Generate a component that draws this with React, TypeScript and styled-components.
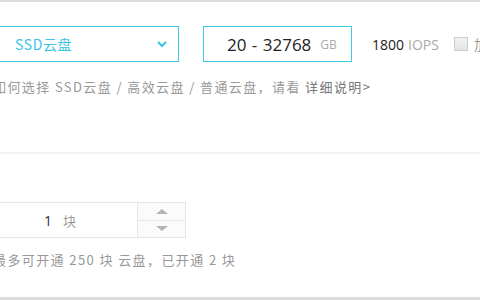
import styled, { createGlobalStyle } from "styled-components";

const GlobalStyle = createGlobalStyle`
  html, body {
    margin: 0;
    padding: 0;
    background: #fff;
    overflow: hidden;
  }
  body {
    font-family: "Liberation Sans", "Noto Sans CJK SC", sans-serif;
  }
`;

const Page = styled.div`
  width: 480px;
  height: 300px;
  box-sizing: border-box;
  border-top: 2px solid #dcdcdc;
  border-bottom: 3px solid #dcdcdc;
  display: flex;
  flex-direction: column;
  overflow: hidden;
`;

const Section = styled.div<{ $top: number; $height: number; $divider?: boolean }>`
  padding-top: ${(p) => p.$top}px;
  height: ${(p) => p.$height}px;
  box-sizing: border-box;
  border-bottom: ${(p) => (p.$divider ? "2px solid #f2f2f2" : "none")};
  margin-left: -20px;
`;

const Row = styled.div`
  display: flex;
  align-items: center;
  & > * {
    flex-shrink: 0;
  }
`;

const Select = styled.div`
  width: 199px;
  height: 36px;
  box-sizing: border-box;
  border: 1px solid #3fcbe6;
  display: flex;
  align-items: center;
  justify-content: space-between;
  padding: 0 10px 0 34px;
  color: #3cc4e4;
  font-size: 14px;
  letter-spacing: 0.6px;
  font-family: "Noto Sans CJK SC", sans-serif;
`;

const SizeBox = styled.div`
  margin-left: 24px;
  width: 149px;
  height: 36px;
  box-sizing: border-box;
  border: 1px solid #3fcbe6;
  display: flex;
  align-items: center;
  padding-left: 23px;
  font-family: "Open Sans", "Liberation Sans", sans-serif;
`;

const Range = styled.span`
  font-size: 17px;
  color: #222;
  word-spacing: 1px;
`;

const Unit = styled.span`
  font-size: 12px;
  color: #aaa;
  margin-left: 9px;
`;

const Iops = styled.div`
  margin-left: 20px;
  font-size: 14px;
  font-family: "Open Sans", "Liberation Sans", sans-serif;
  color: #222;
  display: flex;
  align-items: center;
  white-space: nowrap;
`;

const IopsLabel = styled.span`
  color: #aaa;
  margin-left: 4px;
`;

const Check = styled.span`
  display: inline-block;
  width: 14px;
  height: 14px;
  box-sizing: border-box;
  border: 1px solid #ccc;
  background: linear-gradient(#f4f4f4, #e4e4e4);
  margin-left: 15px;
`;

const CutText = styled.span`
  margin-left: 6px;
  color: #999;
  font-family: "Noto Sans CJK SC", sans-serif;
`;

const Hint = styled.div<{ $top: number }>`
  margin-top: ${(p) => p.$top}px;
  margin-left: 13px;
  font-size: 13px;
  letter-spacing: 1.4px;
  color: #999;
  font-family: "Noto Sans CJK SC", sans-serif;
  white-space: nowrap;
`;

const Link = styled.span`
  color: #777;
`;

const Stepper = styled.div`
  display: flex;
  height: 36px;
`;

const StepInput = styled.div`
  width: 157px;
  box-sizing: border-box;
  border: 1px solid #e6e6e6;
  border-right: none;
  display: flex;
  align-items: center;
  justify-content: center;
  gap: 11px;
  padding-left: 2px;
`;

const Count = styled.span`
  font-size: 14px;
  color: #333;
  font-family: "Open Sans", "Liberation Sans", sans-serif;
`;

const CountUnit = styled.span`
  font-size: 13px;
  color: #999;
  font-family: "Noto Sans CJK SC", sans-serif;
`;

const Spin = styled.div`
  width: 49px;
  box-sizing: border-box;
  border: 1px solid #e6e6e6;
  display: flex;
  flex-direction: column;
`;

const SpinButton = styled.div<{ $down?: boolean }>`
  flex: 1;
  display: flex;
  align-items: center;
  justify-content: center;
  background: #fbfbfb;
  border-top: ${(p) => (p.$down ? "1px solid #e6e6e6" : "none")};
`;

const Arrow = styled.span<{ $down?: boolean }>`
  width: 0;
  height: 0;
  border-left: 6px solid transparent;
  border-right: 6px solid transparent;
  ${(p) =>
    p.$down
      ? "border-top: 5px solid #b5b5b5;"
      : "border-bottom: 5px solid #b5b5b5;"}
`;

function Chevron() {
  return (
    <svg width="12" height="8" viewBox="0 0 12 8">
      <path d="M2 2 L6 6 L10 2" fill="none" stroke="#3cc4e4" strokeWidth="2" />
    </svg>
  );
}

export default function App() {
  return (
    <>
      <GlobalStyle />
      <Page>
        <Section $top={24} $height={152} $divider>
          <Row>
            <Select>
              <span>SSD云盘</span>
              <Chevron />
            </Select>
            <SizeBox>
              <Range>20 - 32768</Range>
              <Unit>GB</Unit>
            </SizeBox>
            <Iops>
              1800<IopsLabel>IOPS</IopsLabel>
              <Check />
              <CutText>加</CutText>
            </Iops>
          </Row>
          <Hint $top={15}>
            如何选择 SSD云盘 / 高效云盘 / 普通云盘，请看 <Link>详细说明&gt;</Link>
          </Hint>
        </Section>
        <Section $top={48} $height={140}>
          <Stepper>
            <StepInput>
              <Count>1</Count>
              <CountUnit>块</CountUnit>
            </StepInput>
            <Spin>
              <SpinButton>
                <Arrow />
              </SpinButton>
              <SpinButton $down>
                <Arrow $down />
              </SpinButton>
            </Spin>
          </Stepper>
          <Hint $top={12}>最多可开通 250 块 云盘，已开通 2 块</Hint>
        </Section>
      </Page>
    </>
  );
}
